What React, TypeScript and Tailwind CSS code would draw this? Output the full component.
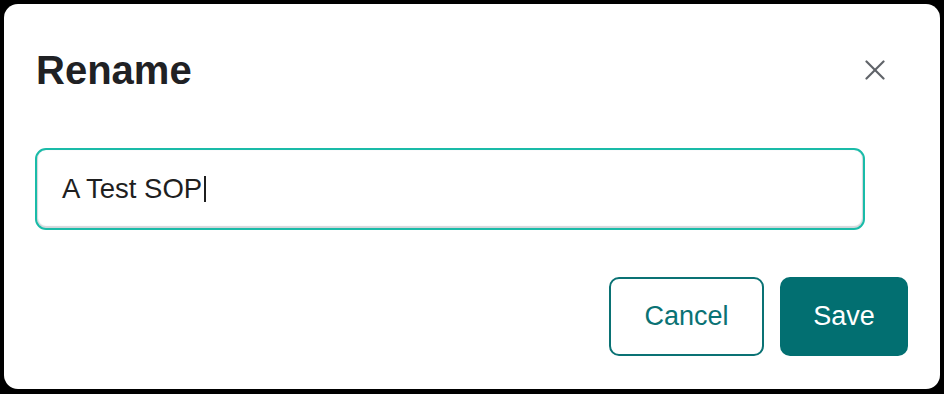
import { useState } from "react";

export default function App() {
  const [name, setName] = useState("A Test SOP");

  return (
    <div className="h-[394px] w-[944px] bg-black p-1 font-['Liberation_Sans',Arial,sans-serif]">
      <div className="flex h-[385px] w-[936px] flex-col rounded-[14px] bg-white pl-[31px] pr-[32px] pt-[47px]">
        <div className="flex h-[38px] items-center justify-between">
          <h2 className="pl-[1px] text-[40px] font-bold leading-none text-[#202124]">Rename</h2>
          <button className="mr-[22px] flex h-[22px] w-[22px] items-center justify-center text-[#5f6368]">
            <svg width="20" height="20" viewBox="0 0 20 20" fill="none" stroke="currentColor" strokeWidth="2.2" strokeLinecap="round">
              <path d="M1.5 1.5 18.5 18.5" />
              <path d="M18.5 1.5 1.5 18.5" />
            </svg>
          </button>
        </div>

        <div className="mt-[59px] flex h-[82px] w-[830px] items-center rounded-[11px] border-2 border-[#1abba8] px-[25px] shadow-[inset_0_-1px_1px_1px_#d3d6da]">
          <span className="text-[27.5px] leading-none text-[#1f1f1f]">{name}</span>
          <span className="ml-[2px] h-[26px] w-[2px] bg-[#1f1f1f]" />
        </div>

        <div className="mt-[47px] flex justify-end gap-4">
          <button
            onClick={() => setName("A Test SOP")}
            className="h-[79px] w-[155px] rounded-[10px] border-2 border-[#0a7274] text-[27px] text-[#0a7274]"
          >
            Cancel
          </button>
          <button className="h-[79px] w-[128px] rounded-[10px] bg-[#026f71] text-[27px] text-white">
            Save
          </button>
        </div>
      </div>
    </div>
  );
}
